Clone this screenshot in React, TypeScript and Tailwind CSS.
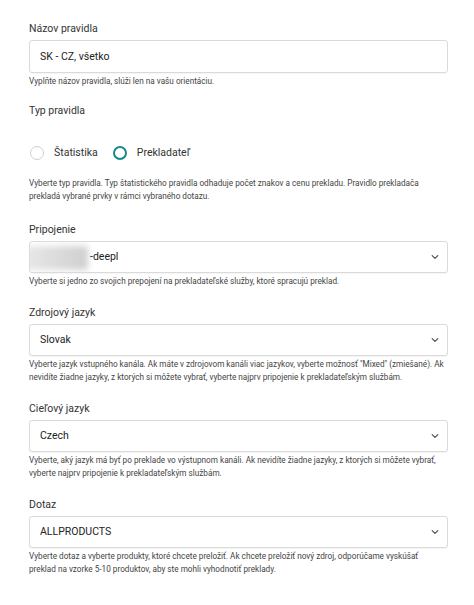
import React from "react";

const font = { fontFamily: "Roboto, 'Noto Sans', sans-serif" };

function Chevron() {
  return (
    <svg width="8" height="6" viewBox="0 0 8 6" className="shrink-0">
      <path d="M1.2 1.6 L4 4.4 L6.8 1.6" fill="none" stroke="#555" strokeWidth="1.3" strokeLinecap="round" strokeLinejoin="round" />
    </svg>
  );
}

function Label({ children }: { children: React.ReactNode }) {
  return <div className="text-[10.5px] leading-[14px] text-[#333] mb-[4px]">{children}</div>;
}

function Help({ children, className = "" }: { children: React.ReactNode; className?: string }) {
  return <div className={"text-[8.2px] leading-[13px] text-[#444] mt-[2px] " + className}>{children}</div>;
}

function Select({ children, blur }: { children: React.ReactNode; blur?: boolean }) {
  return (
    <div className="relative h-[32px] border border-[#dadada] rounded-[3px] flex items-center pl-[10px] pr-[8px] shadow-[0_1px_1px_rgba(0,0,0,0.04)] bg-white overflow-hidden">
      {blur && (
        <span className="absolute left-[-4px] top-[4px] w-[62px] h-[24px] bg-gradient-to-r from-[#e8e8e8] to-[#cfcfcf] rounded-[3px] blur-[3px]" />
      )}
      <div className={"relative flex-1 text-[10.5px] text-[#222] flex items-center" + (blur ? " pl-[50px]" : "")}>{children}</div>
      <Chevron />
    </div>
  );
}

export default function App() {
  return (
    <div className="w-[474px] h-[605px] bg-white pl-[29px] pr-[26px] pt-[22px]" style={font}>
      <Label>Názov pravidla</Label>
      <div className="h-[33px] border border-[#dadada] rounded-[3px] flex items-center pl-[10px] text-[10.5px] text-[#222] shadow-[0_1px_1px_rgba(0,0,0,0.04)]">
        SK - CZ, všetko
      </div>
      <Help>Vyplňte názov pravidla, slúži len na vašu orientáciu.</Help>

      <div className="mt-[16px]">
        <Label>Typ pravidla</Label>
        <div className="flex items-center mt-[27px] h-[16px]">
          <span className="w-[14px] h-[14px] rounded-full border border-[#d0d0d0] ml-[1px]" />
          <span className="ml-[10px] text-[10.5px] text-[#333]">Štatistika</span>
          <span className="w-[14px] h-[14px] rounded-full border-[2.5px] border-[#13898d] ml-[15px]" />
          <span className="ml-[10px] text-[10.5px] text-[#333]">Prekladateľ</span>
        </div>
        <div className="mt-[16px] text-[8.2px] leading-[13px] text-[#444]">
          Vyberte typ pravidla. Typ štatistického pravidla odhaduje počet znakov a cenu prekladu. Pravidlo prekladača prekladá vybrané prvky v rámci vybraného dotazu.
        </div>
      </div>

      <div className="mt-[20px]">
        <Label>Pripojenie</Label>
        <Select blur>
          <span>-deepl</span>
        </Select>
        <Help>Vyberte si jedno zo svojich prepojení na prekladateľské služby, ktoré spracujú preklad.</Help>
      </div>

      <div className="mt-[18px]">
        <Label>Zdrojový jazyk</Label>
        <Select>Slovak</Select>
        <Help>
          Vyberte jazyk vstupného kanála. Ak máte v zdrojovom kanáli viac jazykov, vyberte možnosť "Mixed" (zmiešané). Ak nevidíte žiadne jazyky, z ktorých si môžete vybrať, vyberte najprv pripojenie k prekladateľským službám.
        </Help>
      </div>

      <div className="mt-[18px]">
        <Label>Cieľový jazyk</Label>
        <Select>Czech</Select>
        <Help>
          Vyberte, aký jazyk má byť po preklade vo výstupnom kanáli. Ak nevidíte žiadne jazyky, z ktorých si môžete vybrať, vyberte najprv pripojenie k prekladateľským službám.
        </Help>
      </div>

      <div className="mt-[18px]">
        <Label>Dotaz</Label>
        <Select>ALLPRODUCTS</Select>
        <Help className="pr-[20px]">
          Vyberte dotaz a vyberte produkty, ktoré chcete preložiť. Ak chcete preložiť nový zdroj, odporúčame vyskúšať preklad na vzorke 5-10 produktov, aby ste mohli vyhodnotiť preklady.
        </Help>
      </div>
    </div>
  );
}
